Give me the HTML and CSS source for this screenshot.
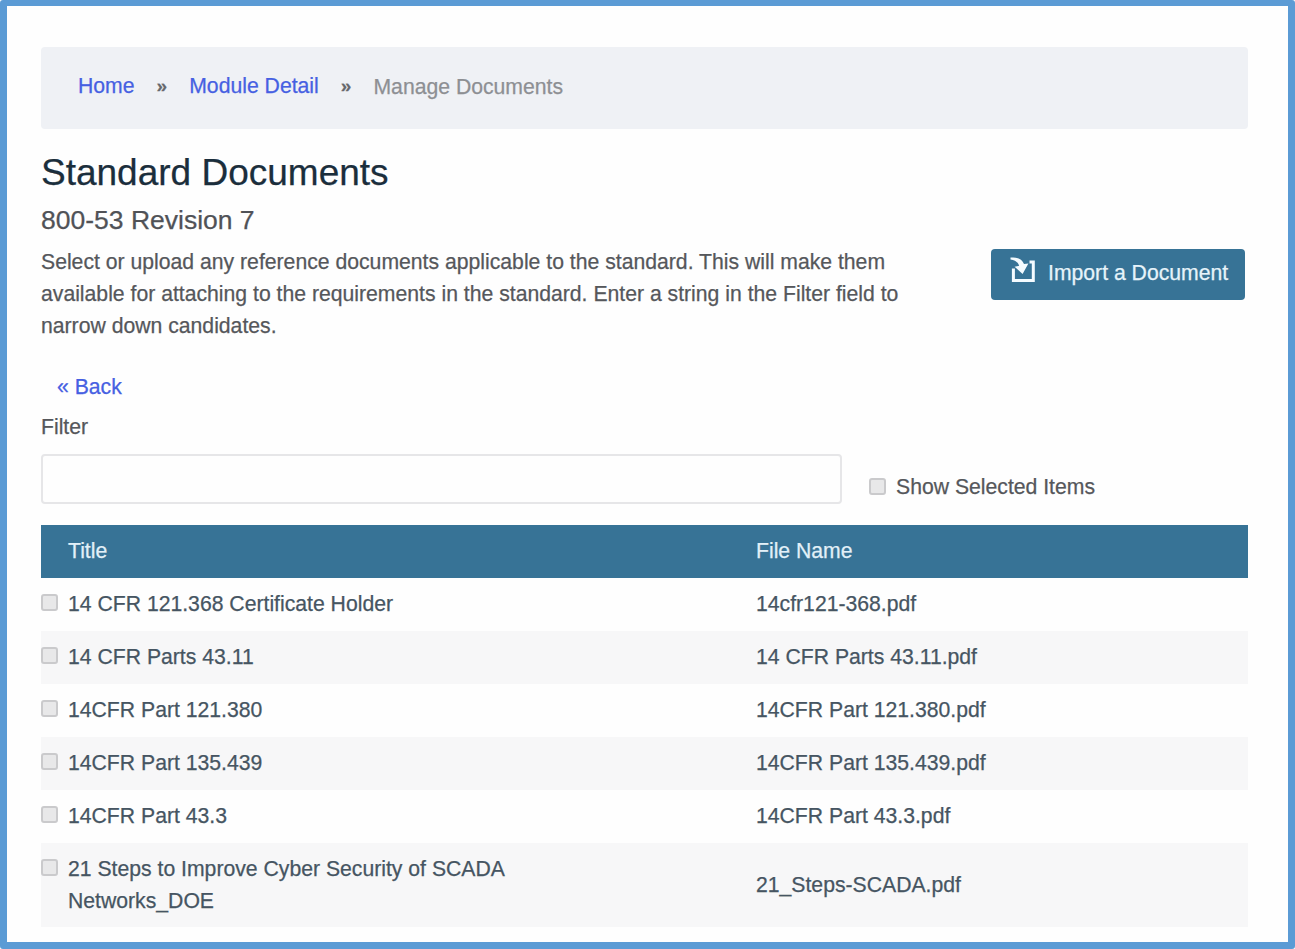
FILE: index.html
```html
<!DOCTYPE html>
<html lang="en">
<head>
<meta charset="utf-8">
<title>Standard Documents</title>
<link rel="stylesheet" href="styles.css">
</head>
<body>
<main class="page">
  <nav class="breadcrumb">
    <a class="home" href="#">Home</a><span class="sep">»</span><a class="module" href="#">Module Detail</a><span class="sep">»</span><span class="current">Manage Documents</span>
  </nav>
  <h1>Standard Documents</h1>
  <h2>800-53 Revision 7</h2>
  <section class="intro">
    <p>Select or upload any reference documents applicable to the standard. This will make them<br>available for attaching to the requirements in the standard. Enter a string in the Filter field to<br>narrow down candidates.</p>
    <button class="import" type="button">
      <svg class="import-icon" viewBox="0 0 26 26" width="26" height="26">
        <path d="M3.4 11.5V23.6H23.3V5H19.5" fill="none" stroke="currentColor" stroke-width="3"/>
        <path d="M0.5 0.6C7 -0.2 12.2 1.8 14 7L18.4 6.4L12.6 17L4.6 9.8L9.2 8.8C8 5.2 5 2.8 0.5 2.4Z" fill="currentColor"/>
      </svg>
      <span>Import a Document</span>
    </button>
  </section>
  <a class="back" href="#">« Back</a>
  <label class="filter-label" for="filter">Filter</label>
  <div class="filter-row">
    <input class="filter" id="filter" type="text">
    <label class="show"><input class="check" type="checkbox"><span>Show Selected Items</span></label>
  </div>
  <div class="table">
    <div class="row head"><span></span><span class="title">Title</span><span>File Name</span></div>
    <div class="row"><input class="check" type="checkbox"><span>14 CFR 121.368 Certificate Holder</span><span class="file">14cfr121-368.pdf</span></div>
    <div class="row"><input class="check" type="checkbox"><span>14 CFR Parts 43.11</span><span class="file">14 CFR Parts 43.11.pdf</span></div>
    <div class="row"><input class="check" type="checkbox"><span>14CFR Part 121.380</span><span class="file">14CFR Part 121.380.pdf</span></div>
    <div class="row"><input class="check" type="checkbox"><span>14CFR Part 135.439</span><span class="file">14CFR Part 135.439.pdf</span></div>
    <div class="row"><input class="check" type="checkbox"><span>14CFR Part 43.3</span><span class="file">14CFR Part 43.3.pdf</span></div>
    <div class="row tall"><input class="check" type="checkbox"><span>21 Steps to Improve Cyber Security of SCADA<br>Networks_DOE</span><span class="file">21_Steps-SCADA.pdf</span></div>
  </div>
</main>
</body>
</html>
```
FILE: styles.css
```css
* { box-sizing: border-box; }
body {
  margin: 0;
  background: #fefefe;
  font-family: "Liberation Sans", Arial, sans-serif;
  font-size: 21.2px;
  line-height: 32px;
  color: #55575b;
  white-space: nowrap;
  -webkit-text-stroke: 0.25px currentColor;
}
.page {
  height: 949px;
  border: 7px solid #5b9bd5;
  border-top-width: 6px;
  border-radius: 3px;
  background: #fefefe;
  padding: 41px 40px 0 34px;
  overflow: hidden;
}
a { color: #4660e2; text-decoration: none; }
.breadcrumb {
  display: flex;
  height: 82px;
  padding: 23px 37px;
  background: #eff1f5;
  border-radius: 4px;
}
.sep { width: 54.7px; text-align: center; font-size: 19px; font-weight: 700; color: #66686c; }
.current { color: #8d8f93; padding-top: 1px; }
h1 {
  margin: 22px 0 0;
  font-size: 37px;
  line-height: 44px;
  font-weight: 400;
  color: #1b2e3c;
}
h2 {
  margin: 9px 0 0;
  font-size: 26.5px;
  line-height: 32px;
  font-weight: 400;
  color: #505257;
}
.intro {
  display: flex;
  justify-content: space-between;
  align-items: flex-start;
  padding: 10px 3px 0 0;
}
p { margin: 0; }
.import {
  display: flex;
  align-items: center;
  gap: 12px;
  width: 254px;
  height: 51px;
  margin-top: 3px;
  padding: 0 0 3px 19px;
  border: 0;
  border-radius: 4px;
  background: #377396;
  color: #e6f3fa;
  font: inherit;
}
.import-icon { margin-top: -6px; flex: none; color: #f4fbff; }
.back { display: block; width: max-content; margin: 29px 0 0 16px; }
.filter-label { display: block; margin-top: 8px; }
.filter-row { display: flex; gap: 27px; height: 50px; margin-top: 11px; }
.filter {
  width: 801px;
  height: 50px;
  border: 2px solid #e6e6e8;
  border-radius: 4px;
  background: #fefefe;
}
.show { display: flex; padding-top: 17px; gap: 10px; }
.check {
  appearance: none;
  width: 17px;
  height: 17px;
  margin: 7px 0 0;
  border: 2px solid #cacacc;
  border-radius: 3px;
  background: #e8e8e9;
}
.table { margin-top: 21px; color: #465562; }
.row {
  display: grid;
  grid-template-columns: 27px 688px 1fr;
  min-height: 53px;
  padding-top: 10px;
}
.row .check { margin-top: 6px; }
.row:nth-child(odd):not(.head) { background: #fefefe; }
.row:nth-child(odd):not(.head) { background: #f7f7f8; }
.head { background: #377396; color: #e2f0f8; }
.tall { height: 84px; }
.tall .file { padding-top: 16px; }
```
